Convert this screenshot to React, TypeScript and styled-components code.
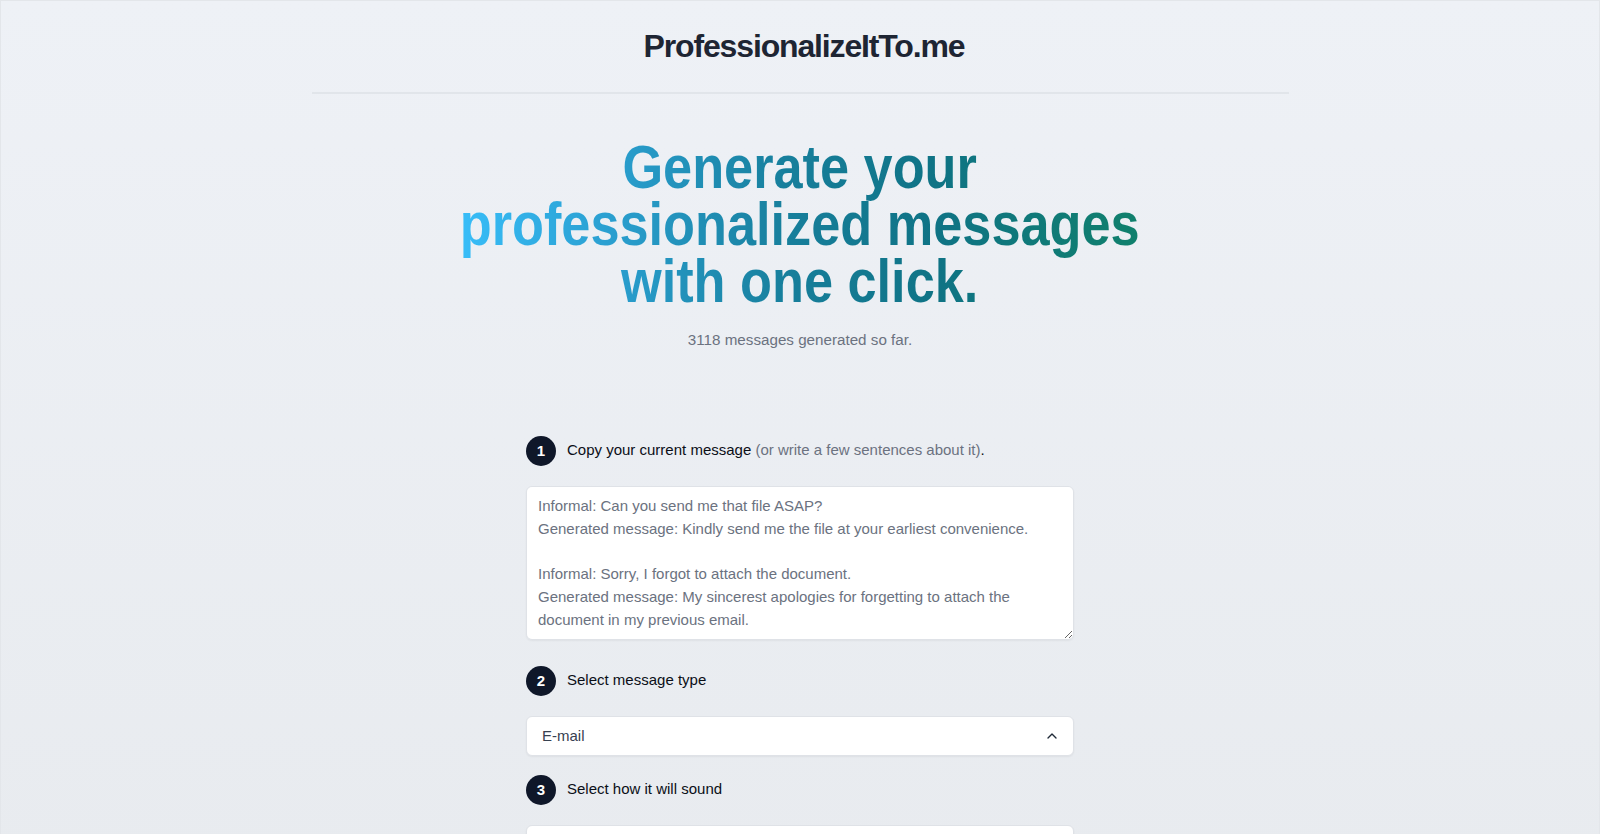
import React from "react";
import styled, { createGlobalStyle } from "styled-components";
import { ChevronUp } from "lucide-react";

const GlobalStyle = createGlobalStyle`
  html, body {
    margin: 0;
    padding: 0;
  }
  body {
    font-family: "Liberation Sans", Arial, sans-serif;
    background: linear-gradient(to bottom, #eef1f6 0%, #e8ebef 100%);
    min-height: 834px;
  }
  * {
    box-sizing: border-box;
  }
`;

const Page = styled.div`
  min-height: 834px;
  border: 1px solid #e3e6ea;
  border-bottom: none;
  display: flex;
  flex-direction: column;
  align-items: center;
`;

const Shell = styled.div`
  width: 977px;
  display: flex;
  flex-direction: column;
  align-items: center;
`;

const Header = styled.header`
  width: 100%;
  padding: 25px 0 26px;
  border-bottom: 2px solid #e1e5ea;
  display: flex;
  justify-content: center;
`;

const Brand = styled.h2`
  margin: 0 0 0 8px;
  font-family: "Liberation Sans", Arial, sans-serif;
  font-size: 32px;
  line-height: 40px;
  font-weight: 700;
  letter-spacing: -1.15px;
  color: #1e2533;
`;

const Main = styled.main`
  width: 100%;
  display: flex;
  flex-direction: column;
  align-items: center;
  text-align: center;
`;

// the reference face is a condensed bold; squeeze the regular one to match
const Hero = styled.h1`
  margin: 45px 0 0;
  font-family: "Liberation Sans Narrow", "Liberation Sans", Arial, sans-serif;
  font-size: 61px;
  line-height: 57px;
  font-weight: 700;
  letter-spacing: 0;
  white-space: nowrap;
  transform: scaleX(0.857);
  background: linear-gradient(
    to right,
    #38bdf8 0%,
    #2a9fd0 22%,
    #177f9c 48%,
    #0f7385 70%,
    #10806c 100%
  );
  -webkit-background-clip: text;
  background-clip: text;
  color: transparent;
`;

const Counter = styled.p`
  margin: 19px 0 0;
  font-size: 15.2px;
  line-height: 22.8px;
  color: #6b7280;
`;

const Form = styled.div`
  width: 548px;
  margin-top: 84px;
  display: flex;
  flex-direction: column;
  text-align: left;
`;

const StepRow = styled.div<{ $top?: number }>`
  display: flex;
  align-items: center;
  gap: 11px;
  margin-top: ${(p) => p.$top ?? 0}px;
`;

const StepBadge = styled.span`
  width: 30px;
  height: 30px;
  flex: none;
  border-radius: 50%;
  background: #0f1729;
  color: #ffffff;
  font-size: 15px;
  font-weight: 700;
  display: flex;
  align-items: center;
  justify-content: center;
`;

const StepLabel = styled.p`
  margin: 0;
  font-size: 15px;
  line-height: 22.8px;
  color: #0b0f17;
`;

const Hint = styled.span`
  color: #6b7280;
`;

const MessageBox = styled.textarea`
  display: block;
  width: 100%;
  height: 154px;
  margin-top: 20px;
  padding: 8px 11px;
  border: 1px solid #dfe2e7;
  border-radius: 6px;
  background: #ffffff;
  box-shadow: 0 1px 2px rgba(0, 0, 0, 0.05);
  font-family: "Liberation Sans", Arial, sans-serif;
  font-size: 15px;
  line-height: 22.8px;
  color: #111827;
  outline: none;

  &::placeholder {
    color: #6b7280;
    opacity: 1;
  }
`;

const Dropdown = styled.div`
  width: 100%;
  height: 40px;
  margin-top: 20px;
  padding: 0 13px 0 15px;
  border: 1px solid #dfe2e7;
  border-radius: 6px;
  background: #ffffff;
  box-shadow: 0 1px 2px rgba(0, 0, 0, 0.05);
  display: flex;
  align-items: center;
  justify-content: space-between;
  font-size: 15px;
  color: #374151;
`;

const Chevron = styled.span`
  display: flex;
  color: #1f2937;
`;

const placeholder = `Informal: Can you send me that file ASAP?
Generated message: Kindly send me the file at your earliest convenience.

Informal: Sorry, I forgot to attach the document.
Generated message: My sincerest apologies for forgetting to attach the document in my previous email.`;

function App() {
  return (
    <>
      <GlobalStyle />
      <Page>
        <Shell>
          <Header>
            <Brand>ProfessionalizeItTo.me</Brand>
          </Header>
          <Main>
            <Hero>
              Generate your
              <br />
              professionalized messages
              <br />
              with one click.
            </Hero>
            <Counter>3118 messages generated so far.</Counter>
            <Form>
              <StepRow>
                <StepBadge>1</StepBadge>
                <StepLabel>
                  Copy your current message{" "}
                  <Hint>(or write a few sentences about it)</Hint>.
                </StepLabel>
              </StepRow>
              <MessageBox placeholder={placeholder} />
              <StepRow $top={26}>
                <StepBadge>2</StepBadge>
                <StepLabel>Select message type</StepLabel>
              </StepRow>
              <Dropdown>
                <span>E-mail</span>
                <Chevron>
                  <ChevronUp size={16} strokeWidth={2} />
                </Chevron>
              </Dropdown>
              <StepRow $top={19}>
                <StepBadge>3</StepBadge>
                <StepLabel>Select how it will sound</StepLabel>
              </StepRow>
              <Dropdown>
                <span>Professional</span>
                <Chevron>
                  <ChevronUp size={16} strokeWidth={2} />
                </Chevron>
              </Dropdown>
            </Form>
          </Main>
        </Shell>
      </Page>
    </>
  );
}

export default App;
